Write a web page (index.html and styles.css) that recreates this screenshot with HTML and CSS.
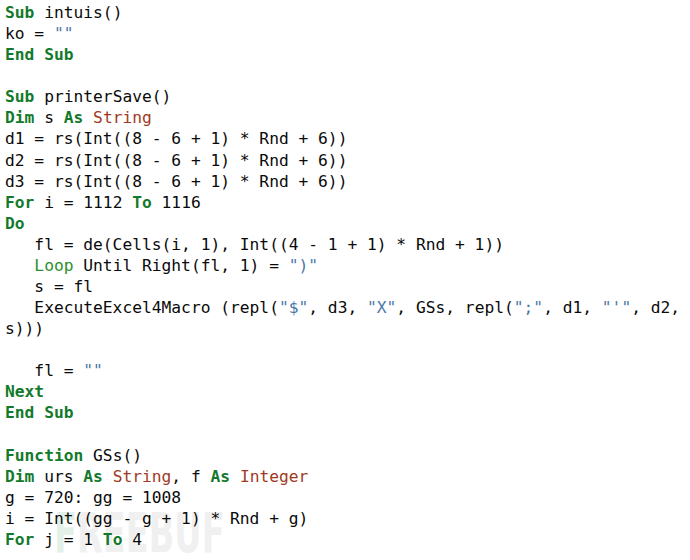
FILE: index.html
```html
<!DOCTYPE html>
<html>
<head>
<meta charset="utf-8">
<link rel="stylesheet" href="styles.css">
</head>
<body>
<div class="page">
<div class="watermark"><span class="wm-f">F</span>REEBUF</div>
<pre class="code"><span class="kw">Sub</span> intuis()
ko = <span class="str">""</span>
<span class="kw">End Sub</span>

<span class="kw">Sub</span> printerSave()
<span class="kw">Dim</span> s <span class="kw">As</span> <span class="ty">String</span>
d1 = rs(Int((8 - 6 + 1) * Rnd + 6))
d2 = rs(Int((8 - 6 + 1) * Rnd + 6))
d3 = rs(Int((8 - 6 + 1) * Rnd + 6))
<span class="kw">For</span> i = 1112 <span class="kw">To</span> 1116
<span class="kw">Do</span>
   fl = de(Cells(i, 1), Int((4 - 1 + 1) * Rnd + 1))
   <span class="kw2">Loop</span> Until Right(fl, 1) = <span class="str">")"</span>
   s = fl
   ExecuteExcel4Macro (repl(<span class="str">"$"</span>, d3, <span class="str">"X"</span>, GSs, repl(<span class="str">";"</span>, d1, <span class="str">"'"</span>, d2,
s)))

   fl = <span class="str">""</span>
<span class="kw">Next</span>
<span class="kw">End Sub</span>

<span class="kw">Function</span> GSs()
<span class="kw">Dim</span> urs <span class="kw">As</span> <span class="ty">String</span>, f <span class="kw">As</span> <span class="ty">Integer</span>
g = 720: gg = 1008
i = Int((gg - g + 1) * Rnd + g)
<span class="kw">For</span> j = 1 <span class="kw">To</span> 4</pre>
</div>
</body>
</html>
```

FILE: styles.css
```css
html, body {
  margin: 0;
  padding: 0;
  background: #ffffff;
}
.page {
  position: relative;
  width: 690px;
  height: 560px;
  overflow: hidden;
}
.code {
  position: relative;
  z-index: 1;
  margin: 0;
  padding: 2px 0 0 5px;
  font-family: "DejaVu Sans Mono", "Liberation Mono", monospace;
  font-size: 16.25px;
  line-height: 21.08px;
  color: #0a0a0a;
  white-space: pre;
}
.kw {
  color: #137a2b;
  font-weight: bold;
}
.kw2 {
  color: #2a8f2e;
}
.ty {
  color: #a03a22;
}
.str {
  color: #4a78a8;
}
.watermark {
  position: absolute;
  left: 54px;
  top: 503px;
  z-index: 0;
  font-family: "DejaVu Sans", "Liberation Sans", sans-serif;
  font-weight: bold;
  font-size: 56px;
  line-height: 60px;
  color: #f0f0f0;
  white-space: nowrap;
  transform: scaleX(0.6);
  transform-origin: left top;
}
.wm-f {
  color: #e2f0e7;
}
```
